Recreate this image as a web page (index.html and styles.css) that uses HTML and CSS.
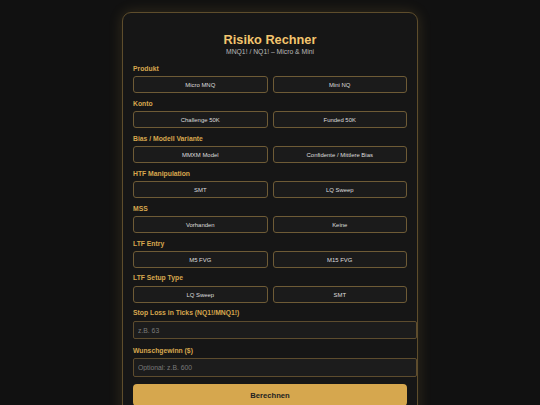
FILE: index.html
```html
<!DOCTYPE html>
<html lang="de">
<head>
<meta charset="utf-8">
<title>Risiko Rechner</title>
<link rel="stylesheet" href="styles.css">
</head>
<body>
<main class="card">
  <h1 class="title">Risiko Rechner</h1>
  <p class="subtitle">MNQ1! / NQ1! – Micro &amp; Mini</p>

  <section class="field">
    <div class="label">Produkt</div>
    <div class="choices">
      <button class="choice">Micro MNQ</button>
      <button class="choice">Mini NQ</button>
    </div>
  </section>

  <section class="field">
    <div class="label">Konto</div>
    <div class="choices">
      <button class="choice">Challenge 50K</button>
      <button class="choice">Funded 50K</button>
    </div>
  </section>

  <section class="field">
    <div class="label">Bias / Modell Variante</div>
    <div class="choices">
      <button class="choice">MMXM Model</button>
      <button class="choice">Confidente / Mittlere Bias</button>
    </div>
  </section>

  <section class="field">
    <div class="label">HTF Manipulation</div>
    <div class="choices">
      <button class="choice">SMT</button>
      <button class="choice">LQ Sweep</button>
    </div>
  </section>

  <section class="field">
    <div class="label">MSS</div>
    <div class="choices">
      <button class="choice">Vorhanden</button>
      <button class="choice">Keine</button>
    </div>
  </section>

  <section class="field">
    <div class="label">LTF Entry</div>
    <div class="choices">
      <button class="choice">M5 FVG</button>
      <button class="choice">M15 FVG</button>
    </div>
  </section>

  <section class="field">
    <div class="label">LTF Setup Type</div>
    <div class="choices">
      <button class="choice">LQ Sweep</button>
      <button class="choice">SMT</button>
    </div>
  </section>

  <section class="field field-input">
    <label class="label" for="sl">Stop Loss in Ticks (NQ1!/MNQ1!)</label>
    <input class="text-input" id="sl" type="text" placeholder="z.B. 63">
  </section>

  <section class="field field-input">
    <label class="label" for="goal">Wunschgewinn ($)</label>
    <input class="text-input" id="goal" type="text" placeholder="Optional: z.B. 600">
  </section>

  <button class="submit">Berechnen</button>
</main>
</body>
</html>
```

FILE: styles.css
```css
html, body {
  margin: 0;
  padding: 0;
  background: #111111;
  font-family: "Liberation Sans", Arial, sans-serif;
  height: 100%;
  overflow: hidden;
}

.card {
  box-sizing: content-box;
  width: 274px;
  margin: 12px auto 0;
  padding: 0 10px 20px;
  background: #161616;
  border: 1px solid #5e4d2c;
  border-radius: 9px;
  box-shadow: 0 0 14px rgba(212, 166, 79, 0.18);
}

.title {
  margin: 0;
  padding-top: 19.5px;
  font-size: 12.75px;
  line-height: 14.6px;
  font-weight: bold;
  text-align: center;
  color: #f3c56e;
}

.subtitle {
  margin: 1px 0 8.7px;
  font-size: 6.8px;
  line-height: 7.8px;
  text-align: center;
  color: #b9b9b9;
}

.field {
  margin-bottom: 6.3px;
}

.field-input {
  margin-bottom: 7.6px;
}

.label {
  display: block;
  margin-bottom: 3.6px;
  font-size: 6.8px;
  line-height: 7.8px;
  font-weight: bold;
  color: #d6a74e;
}

.choices {
  display: grid;
  grid-template-columns: 1fr 1fr;
  gap: 5px;
}

.choice {
  height: 17.3px;
  padding: 0;
  background: #1b1b1b;
  border: 1px solid #6e5b36;
  border-radius: 3px;
  font-family: inherit;
  font-size: 5.95px;
  color: #dedede;
  cursor: pointer;
}

.text-input {
  box-sizing: content-box;
  display: block;
  width: 100%;
  height: 8.4px;
  padding: 4px 4px;
  margin: 0;
  background: #1c1c1c;
  border: 1px solid #5d4c2e;
  border-radius: 2px;
  font-family: inherit;
  font-size: 6.8px;
  color: #dddddd;
  outline: none;
}

.text-input::placeholder {
  color: #7a7a7a;
}

.submit {
  display: block;
  width: 100%;
  height: 22px;
  padding: 0;
  background: #d6a74e;
  border: none;
  border-radius: 4px;
  font-family: inherit;
  font-size: 7.65px;
  font-weight: bold;
  color: #222222;
  cursor: pointer;
}
```
